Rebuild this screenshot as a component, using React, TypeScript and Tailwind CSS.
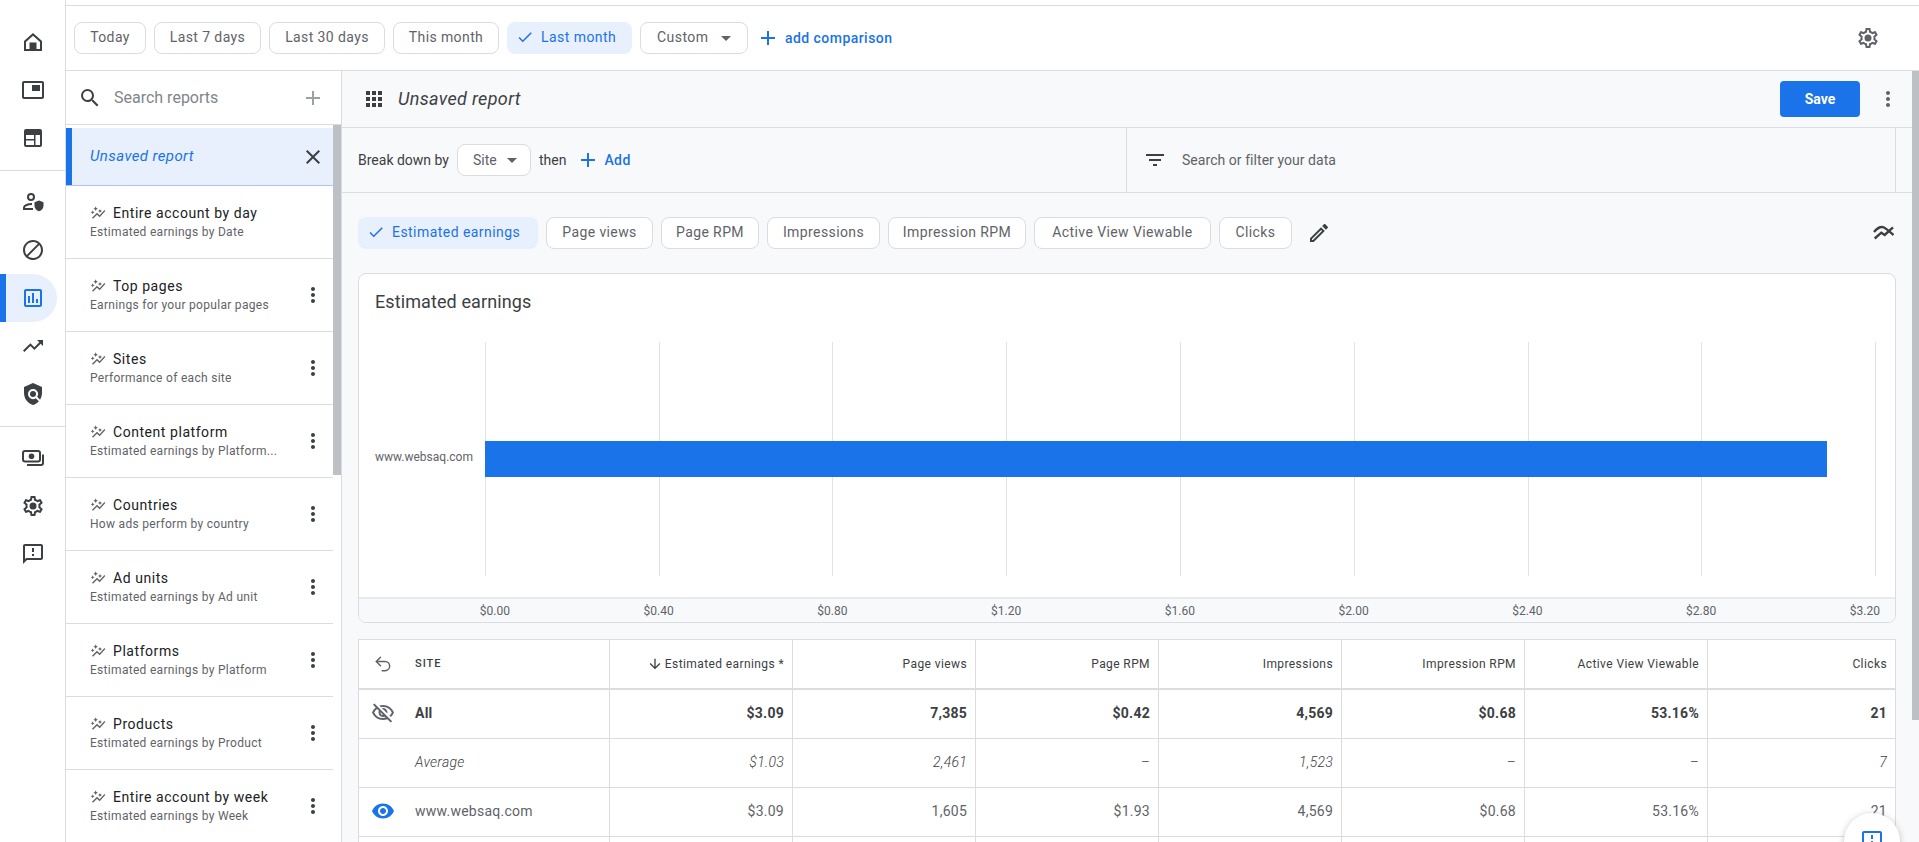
import { Undo2 } from "lucide-react";
import {
  MdAdd,
  MdApps,
  MdArrowDownward,
  MdArrowDropDown,
  MdBlock,
  MdCheck,
  MdClose,
  MdFilterList,
  MdMoreVert,
  MdOutlineAssessment,
  MdOutlineAutoGraph,
  MdOutlineEdit,
  MdOutlineFeedback,
  MdOutlineVisibilityOff,
  MdPolicy,
  MdSearch,
  MdTrendingUp,
  MdVisibility,
} from "react-icons/md";

const dateChips = [
  { label: "Today", width: "w-[72px]" },
  { label: "Last 7 days", width: "w-[107px]" },
  { label: "Last 30 days", width: "w-[116px]" },
  { label: "This month", width: "w-[106px]" },
];

const metricChips = [
  { label: "Page views", width: "w-[107px]" },
  { label: "Page RPM", width: "w-[98px]" },
  { label: "Impressions", width: "w-[113px]" },
  { label: "Impression RPM", width: "w-[138px]" },
  { label: "Active View Viewable", width: "w-[177px]" },
  { label: "Clicks", width: "w-[73px]" },
];

const reports = [
  { title: "Entire account by day", sub: "Estimated earnings by Date", noMenu: true },
  { title: "Top pages", sub: "Earnings for your popular pages" },
  { title: "Sites", sub: "Performance of each site" },
  { title: "Content platform", sub: "Estimated earnings by Platform..." },
  { title: "Countries", sub: "How ads perform by country" },
  { title: "Ad units", sub: "Estimated earnings by Ad unit" },
  { title: "Platforms", sub: "Estimated earnings by Platform" },
  { title: "Products", sub: "Estimated earnings by Product" },
  { title: "Entire account by week", sub: "Estimated earnings by Week" },
];

const ticks = ["$0.00", "$0.40", "$0.80", "$1.20", "$1.60", "$2.00", "$2.40", "$2.80", "$3.20"];
const gridX = [0, 174, 347, 521, 695, 869, 1043, 1216, 1390];

const columns = ["Page views", "Page RPM", "Impressions", "Impression RPM", "Active View Viewable", "Clicks"];
const allRow = ["$3.09", "7,385", "$0.42", "4,569", "$0.68", "53.16%", "21"];
const avgRow = ["$1.03", "2,461", "–", "1,523", "–", "–", "7"];
const siteRow = ["$3.09", "1,605", "$1.93", "4,569", "$0.68", "53.16%", "21"];

const rowGrid = "grid grid-cols-[251px_183px_183px_183px_183px_183px_183px_1fr]";

const HomeIcon = () => (
  <svg viewBox="0 0 24 24" className="h-6 w-6 fill-[#3c4043]">
    <path d="M12 3L3 11v10h18V11l-9-8zm7 16H5v-7.100l7-6.200 7 6.200V19z" />
    <rect x="8.500" y="12.500" width="7" height="7" />
  </svg>
);

const PipIcon = () => (
  <svg viewBox="0 0 24 24" className="h-6 w-6 fill-[#3c4043]">
    <path d="M21 3H3c-1.100 0-2 .9-2 2v14c0 1.100.9 2 2 2h18c1.100 0 2-.9 2-2V5c0-1.100-.9-2-2-2zm0 16H3V5h18v14z" />
    <rect x="11" y="7" width="8" height="6" />
  </svg>
);

const LayoutIcon = () => (
  <svg viewBox="0 0 24 24" className="h-6 w-6 fill-[#3c4043]">
    <path
      fillRule="evenodd"
      d="M5 3h14a2 2 0 0 1 2 2v14a2 2 0 0 1-2 2H5a2 2 0 0 1-2-2V5a2 2 0 0 1 2-2zm0 6v4h8V9H5zm0 5.500V19h8v-4.500H5zM14.500 9v10H19V9h-4.500z"
    />
  </svg>
);

const PersonShieldIcon = () => (
  <svg viewBox="0 0 24 24" className="h-6 w-6">
    <circle cx="10" cy="7" r="3" fill="none" stroke="#3c4043" strokeWidth="2" />
    <path d="M11 14c-4 0-8 1.400-8 3.500V19h9" fill="none" stroke="#3c4043" strokeWidth="2" />
    <path d="M18 10.500l-4.500 1.800v3.200c0 2.700 1.900 5.100 4.500 5.700 2.600-.6 4.500-3 4.500-5.700v-3.200z" fill="#3c4043" />
  </svg>
);

const MoneyIcon = () => (
  <svg viewBox="0 0 24 24" className="h-6 w-6">
    <rect x="2" y="5" width="17" height="10.500" rx="2" fill="none" stroke="#3c4043" strokeWidth="2" />
    <circle cx="10.500" cy="10.200" r="2.800" fill="#3c4043" />
    <path d="M22 8.500V17a2 2 0 0 1-2 2H6" fill="none" stroke="#3c4043" strokeWidth="2" />
  </svg>
);

const GearIcon = ({ color }: { color: string }) => (
  <svg viewBox="0 0 24 24" className="h-6 w-6" fill={color}>
    <path d="M19.430 12.980c.04-.32.07-.64.07-.98 0-.34-.03-.66-.07-.98l2.110-1.650c.19-.15.24-.42.12-.64l-2-3.460c-.09-.16-.26-.25-.44-.25-.06 0-.12.01-.17.03l-2.490 1c-.52-.4-1.080-.73-1.690-.98l-.38-2.650C14.460 2.180 14.250 2 14 2h-4c-.25 0-.46.18-.49.42l-.38 2.650c-.61.25-1.170.59-1.690.98l-2.490-1c-.06-.02-.12-.03-.18-.03-.17 0-.34.09-.43.25l-2 3.460c-.13.22-.07.49.12.64l2.110 1.650c-.04.32-.07.65-.07.98 0 .33.03.66.07.98l-2.110 1.650c-.19.15-.24.42-.12.64l2 3.460c.09.16.26.25.44.25.06 0 .12-.01.17-.03l2.490-1c.52.4 1.080.73 1.690.98l.38 2.650c.03.24.24.42.49.42h4c.25 0 .46-.18.49-.42l.38-2.650c.61-.25 1.170-.59 1.690-.98l2.490 1c.06.02.12.03.18.03.17 0 .34-.09.43-.25l2-3.460c.12-.22.07-.49-.12-.64l-2.110-1.650zm-1.980-1.710c.04.31.05.52.05.73 0 .21-.02.43-.05.73l-.14 1.130.89.7 1.080.84-.7 1.210-1.270-.51-1.040-.42-.9.68c-.43.32-.84.56-1.250.73l-1.060.43-.16 1.130-.2 1.350h-1.400l-.19-1.350-.16-1.130-1.060-.43c-.43-.18-.83-.41-1.230-.71l-.91-.7-1.060.43-1.270.51-.7-1.210 1.080-.84.89-.7-.14-1.130c-.03-.31-.05-.54-.05-.74s.02-.43.05-.73l.14-1.130-.89-.7-1.080-.84.7-1.210 1.270.51 1.040.42.9-.68c.43-.32.84-.56 1.250-.73l1.060-.43.16-1.130.2-1.350h1.390l.19 1.350.16 1.130 1.060.43c.43.18.83.41 1.230.71l.91.7 1.060-.43 1.270-.51.7 1.210-1.070.85-.89.7.14 1.130z" />
    <circle cx="12" cy="12" r="3.500" />
  </svg>
);

const CompareIcon = () => (
  <svg viewBox="0 0 24 24" className="h-6 w-6 fill-none stroke-[#3c4043] stroke-[2.4]">
    <path d="M2 11C5 7.500 8.500 5 12 6.500c2 .9 6 4.500 9.500 7.500" />
    <path d="M2.700 17.500l6.600-5.800 3.400 2.300 8.300-7.700" />
  </svg>
);

const Chip = ({ label, width }: { label: string; width: string }) => (
  <button className={`flex h-8 ${width} shrink-0 items-center justify-center rounded-lg border border-[#dadce0] bg-white pb-[2px] text-sm tracking-[0.4px] text-[#5f6368]`}>
    {label}
  </button>
);

const ActiveChip = ({ label, width }: { label: string; width: string }) => (
  <button className={`flex h-8 ${width} shrink-0 items-center gap-[7px] rounded-lg bg-[#e8f0fe] pb-[2px] pl-[9px] text-sm tracking-[0.45px] text-[#1a73e8]`}>
    <MdCheck className="h-[18px] w-[18px]" />
    {label}
  </button>
);

const NavItem = ({ children }: { children: React.ReactNode }) => (
  <div className="flex h-12 items-center justify-center">{children}</div>
);

const Sidebar = () => (
  <nav className="flex h-full w-[66px] shrink-0 flex-col border-r border-[#dadce0] bg-white pt-[18px]">
    <NavItem><HomeIcon /></NavItem>
    <NavItem><PipIcon /></NavItem>
    <NavItem><LayoutIcon /></NavItem>
    <div className="mb-[7px] mt-2 border-t border-[#dadce0]" />
    <NavItem><PersonShieldIcon /></NavItem>
    <NavItem><MdBlock className="h-6 w-6 text-[#3c4043]" /></NavItem>
    <div className="flex h-12">
      <div className="w-[6px] bg-[#1a73e8]" />
      <div className="flex w-[51px] items-center rounded-r-full bg-[#e8f0fe] pl-[15px]">
        <MdOutlineAssessment className="h-6 w-6 text-[#1a73e8]" />
      </div>
    </div>
    <NavItem><MdTrendingUp className="h-6 w-6 text-[#3c4043]" /></NavItem>
    <NavItem><MdPolicy className="h-6 w-6 text-[#3c4043]" /></NavItem>
    <div className="mb-[7px] mt-2 border-t border-[#dadce0]" />
    <NavItem><MoneyIcon /></NavItem>
    <NavItem><GearIcon color="#3c4043" /></NavItem>
    <NavItem><MdOutlineFeedback className="h-6 w-6 text-[#3c4043]" /></NavItem>
  </nav>
);

const ReportList = () => (
  <aside className="flex h-full w-[276px] shrink-0 flex-col border-r border-[#dadce0] bg-white">
    <div className="flex h-[54px] shrink-0 items-center border-b border-[#dadce0] pl-[12px] pr-[16px]">
      <MdSearch className="h-6 w-6 text-[#3c4043]" />
      <span className="ml-[12px] flex-1 text-base text-[#80868b]">Search reports</span>
      <MdAdd className="h-6 w-6 text-[#9aa0a6]" />
    </div>
    <div className="flex min-h-0 flex-1">
      <div className="w-[267px] overflow-hidden pt-[3px]">
        <div className="flex h-[58px] items-center border-b border-[#a8c7fa] bg-[#e8f0fe]">
          <div className="h-full w-[6px] bg-[#1a73e8]" />
          <span className="ml-[18px] flex-1 pb-px text-[15px] italic tracking-[0.4px] text-[#1a73e8]">Unsaved report</span>
          <MdClose className="mr-2 h-6 w-6 text-[#3c4043]" />
        </div>
        {reports.map((report) => (
          <div key={report.title} className="flex h-[73px] items-center border-b border-[#dadce0] pl-6 pr-2">
            <div className="flex-1">
              <div className="flex items-center gap-[7px]">
                <MdOutlineAutoGraph className="h-4 w-4 text-[#5f6368]" />
                <span className="text-sm leading-[18px] tracking-[0.55px] text-[#202124]">{report.title}</span>
              </div>
              <div className="pt-px text-xs leading-[18px] tracking-[0.3px] text-[#5f6368]">{report.sub}</div>
            </div>
            {!report.noMenu && <MdMoreVert className="h-6 w-6 text-[#3c4043]" />}
          </div>
        ))}
      </div>
      <div className="w-[8px] bg-white">
        <div className="h-[350px] bg-[#bdc1c6]" />
      </div>
    </div>
  </aside>
);

const EarningsCard = () => (
  <div className="mx-4 flex h-[350px] flex-col overflow-hidden rounded-lg border border-[#dadce0] bg-white">
    <div className="h-[68px] shrink-0 pl-4 pt-4 text-lg leading-6 tracking-[0.1px] text-[#3c4043]">Estimated earnings</div>
    <div className="flex h-[234px] shrink-0">
      <div className="flex w-[126px] shrink-0 items-center pb-1 pl-4 text-xs text-[#5f6368]">www.websaq.com</div>
      <svg viewBox="0 0 1410 234" className="h-[234px] w-[1410px] shrink-0">
        {gridX.map((x) => (
          <line key={x} x1={x + 0.5} x2={x + 0.5} y1="0" y2="234" stroke="#e0e2e5" />
        ))}
        <rect x="0" y="99" width="1342" height="36" fill="#1a73e8" />
      </svg>
    </div>
    <div className="flex-1" />
    <div className="flex h-[25px] shrink-0 items-center border-t-2 border-[#e8eaed] bg-[#f8f9fa] pl-[39px]">
      {ticks.map((tick, i) => (
        <div
          key={tick}
          className={`w-[173.75px] shrink-0 text-center text-xs text-[#5f6368] ${i === 0 ? "pl-5" : ""} ${i === 8 ? "pr-5" : ""}`}
        >
          {tick}
        </div>
      ))}
    </div>
  </div>
);

const DataRow = ({
  label,
  values,
  icon,
  className,
}: {
  label: string;
  values: string[];
  icon?: React.ReactNode;
  className: string;
}) => (
  <div className={`${rowGrid} h-[49px] border-b border-[#dadce0] ${className}`}>
    <div className="flex items-center border-r border-[#dadce0] pb-[2px]">
      <div className="flex w-[56px] shrink-0 justify-center pr-[8px]">{icon}</div>
      {label}
    </div>
    {values.map((value, i) => (
      <div
        key={i}
        className={`flex items-center justify-end pb-[2px] pr-[8px] ${i < values.length - 1 ? "border-r border-[#dadce0]" : ""}`}
      >
        {value}
      </div>
    ))}
  </div>
);

const ReportTable = () => (
  <div className="mx-4 mt-4 border-x border-t border-[#dadce0] bg-white text-sm tracking-[0.25px]">
    <div className={`${rowGrid} h-[50px] border-b-2 border-[#dadce0] text-xs tracking-[0.4px] text-[#3c4043]`}>
      <div className="flex items-center border-r border-[#dadce0]">
        <div className="flex w-[56px] shrink-0 justify-center pr-[8px]">
          <Undo2 className="h-5 w-5 text-[#5f6368]" strokeWidth={1.75} />
        </div>
        <span className="text-[11px] font-medium tracking-[1px] text-[#3c4043]">SITE</span>
      </div>
      <div className="flex items-center justify-end gap-[2px] border-r border-[#dadce0] pr-[8px]">
        <MdArrowDownward className="h-4 w-4 text-[#3c4043]" />
        Estimated earnings *
      </div>
      {columns.map((col, i) => (
        <div
          key={col}
          className={`flex items-center justify-end pr-[8px] ${i < columns.length - 1 ? "border-r border-[#dadce0]" : ""}`}
        >
          {col}
        </div>
      ))}
    </div>
    <DataRow
      label="All"
      values={allRow}
      className="font-bold text-[#3c4043]"
      icon={<MdOutlineVisibilityOff className="h-6 w-6 text-[#5f6368]" />}
    />
    <DataRow label="Average" values={avgRow} className="font-light italic text-[#3c4043]" />
    <DataRow
      label="www.websaq.com"
      values={siteRow}
      className="text-[#5f6368]"
      icon={<MdVisibility className="h-6 w-6 text-[#1a73e8]" />}
    />
    <div className={`${rowGrid} h-[49px]`}>
      {[0, 1, 2, 3, 4, 5, 6].map((n) => (
        <div key={n} className="border-r border-[#dadce0]" />
      ))}
    </div>
  </div>
);

const ReportPane = () => (
  <main className="flex h-full min-w-0 flex-1 bg-[#f8f9fa]">
    <div className="min-w-0 flex-1 overflow-hidden">
      <div className="flex h-[57px] items-center border-b border-[#dadce0] pl-[20px] pr-[12px]">
        <MdApps className="h-6 w-6 text-[#3c4043]" />
        <span className="ml-3 flex-1 text-lg italic tracking-[0.35px] text-[#3c4043]">Unsaved report</span>
        <button className="h-9 w-20 rounded bg-[#1a73e8] text-sm font-bold text-white">Save</button>
        <MdMoreVert className="ml-4 h-6 w-6 text-[#5f6368]" />
      </div>
      <div className="flex h-[65px] items-stretch border-b border-[#dadce0] text-sm text-[#3c4043]">
        <div className="flex w-[785px] shrink-0 items-center border-r border-[#dadce0] pl-4">
          Break down by
          <div className="ml-2 flex h-8 w-[74px] items-center rounded-lg border border-[#dadce0] bg-white pl-[15px] text-[#5f6368]">
            Site
            <MdArrowDropDown className="ml-[3px] h-6 w-6 text-[#5f6368]" />
          </div>
          <span className="ml-2">then</span>
          <MdAdd className="ml-[10px] h-6 w-6 text-[#1a73e8]" />
          <span className="ml-[4px] font-medium tracking-[0.4px] text-[#1a73e8]">Add</span>
        </div>
        <div className="flex flex-1 items-center border-r border-[#dadce0] pl-4 text-[#5f6368]">
          <MdFilterList className="h-6 w-6 text-[#3c4043]" />
          <span className="ml-[15px] tracking-[0.05px]">Search or filter your data</span>
        </div>
        <div className="w-4 shrink-0" />
      </div>
      <div className="flex h-[80px] items-center gap-2 px-4">
        <ActiveChip label="Estimated earnings" width="w-[180px]" />
        {metricChips.map((chip) => (
          <Chip key={chip.label} {...chip} />
        ))}
        <MdOutlineEdit className="ml-[7px] h-6 w-6 text-[#3c4043]" />
        <div className="flex-1" />
        <CompareIcon />
      </div>
      <EarningsCard />
      <ReportTable />
    </div>
    <div className="w-[7px] shrink-0">
      <div className="h-[649px] bg-[#bdc1c6]" />
    </div>
  </main>
);

export default function App() {
  return (
    <div className="relative flex h-screen w-screen overflow-hidden bg-white font-[family-name:Roboto,sans-serif]">
      <Sidebar />
      <div className="flex min-w-0 flex-1 flex-col">
        <div className="h-[6px] shrink-0 border-b border-[#dadce0]" />
        <div className="flex h-[65px] shrink-0 items-center gap-2 border-b border-[#dadce0] pl-2 pr-[39px]">
          {dateChips.map((chip) => (
            <Chip key={chip.label} {...chip} />
          ))}
          <ActiveChip label="Last month" width="w-[125px]" />
          <div className="flex h-8 w-[108px] shrink-0 items-center rounded-lg border border-[#dadce0] pb-[2px] pl-4 text-sm tracking-[0.45px] text-[#5f6368]">
            Custom
            <MdArrowDropDown className="ml-[6px] mt-[2px] h-6 w-6" />
          </div>
          <MdAdd className="h-6 w-6 text-[#1a73e8]" />
          <span className="-ml-[3px] pb-px text-sm font-medium tracking-[0.45px] text-[#1a73e8]">add comparison</span>
          <div className="flex-1" />
          <GearIcon color="#5f6368" />
        </div>
        <div className="flex min-h-0 flex-1">
          <ReportList />
          <ReportPane />
        </div>
      </div>
      <div className="absolute left-[1844px] top-[813px] flex h-14 w-14 items-center justify-center rounded-full bg-white shadow-[0_1px_6px_rgba(60,64,67,0.3)]">
        <MdOutlineFeedback className="h-6 w-6 text-[#1a73e8]" />
      </div>
    </div>
  );
}
